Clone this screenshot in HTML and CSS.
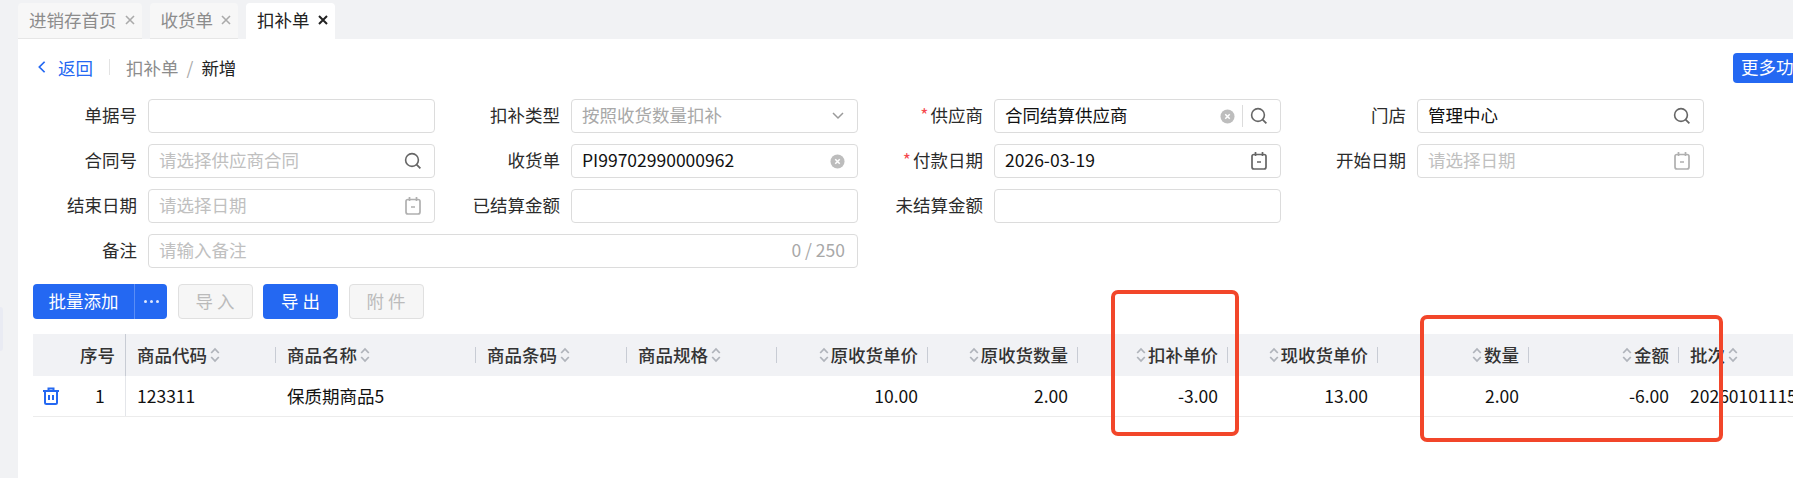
FILE: index.html
```html
<!DOCTYPE html>
<html lang="zh-CN">
<head>
    <meta charset="UTF-8">
    <meta name="viewport" content="width=device-width, initial-scale=1.0">
    <title>扣补单 新增</title>
    <link rel="stylesheet" href="styles.css">
</head>
<body>
    <svg class="defs" width="0" height="0">
        <symbol id="i-search" viewBox="0 0 18 18"><circle cx="8" cy="8" r="6.4" fill="none" stroke="currentColor" stroke-width="1.6"/><path d="M12.6 12.6L16.4 16.4" stroke="currentColor" stroke-width="1.8" fill="none"/></symbol>
        <symbol id="i-date" viewBox="0 0 18 20"><rect x="2" y="3.5" width="14" height="14.5" rx="2" fill="none" stroke="currentColor" stroke-width="1.7"/><path d="M5.5 1v4M12.5 1v4M7 11h4" stroke="currentColor" stroke-width="1.7" fill="none"/></symbol>
        <symbol id="i-clear" viewBox="0 0 16 16"><circle cx="8" cy="8" r="7.5" fill="#bdbdbd"/><path d="M5.6 5.6l4.8 4.8M10.4 5.6l-4.8 4.8" stroke="#fff" stroke-width="1.6"/></symbol>
        <symbol id="i-sort" viewBox="0 0 10 16"><path d="M1.2 6L5 2l3.8 4M1.2 10L5 14l3.8-4" fill="none" stroke="#b0b4bb" stroke-width="1.8"/></symbol>
    </svg>

    <div class="tabs">
        <div class="tab">进销存首页<svg class="tab-x" viewBox="0 0 10 10"><path d="M1 1l8 8M9 1l-8 8"/></svg></div>
        <div class="tab">收货单<svg class="tab-x" viewBox="0 0 10 10"><path d="M1 1l8 8M9 1l-8 8"/></svg></div>
        <div class="tab tab-active">扣补单<svg class="tab-x" viewBox="0 0 10 10"><path d="M1 1l8 8M9 1l-8 8"/></svg></div>
    </div>

    <div class="side-mark"></div>

    <div class="card">
        <div class="nav">
            <svg class="nav-back" viewBox="0 0 10 16"><path d="M8 2L2 8l6 6"/></svg>
            <span class="nav-link">返回</span>
            <span class="nav-line"></span>
            <span class="nav-gray">扣补单</span>
            <span class="nav-slash">/</span>
            <span class="nav-now">新增</span>
            <button class="more-btn">更多功能</button>
        </div>

        <div class="form">
            <div class="item"><label>单据号</label><div class="field"></div></div>
            <div class="item"><label>扣补类型</label><div class="field"><span class="ph dim">按照收货数量扣补</span><svg class="arrow" viewBox="0 0 12 8"><path d="M1 1l5 5 5-5"/></svg></div></div>
            <div class="item"><label><em>*</em>供应商</label><div class="field"><span class="val">合同结算供应商</span><svg class="ico-clear"><use href="#i-clear"/></svg><i class="sep"></i><svg class="ico-search"><use href="#i-search"/></svg></div></div>
            <div class="item"><label>门店</label><div class="field"><span class="val">管理中心</span><svg class="ico-search"><use href="#i-search"/></svg></div></div>

            <div class="item"><label>合同号</label><div class="field"><span class="ph">请选择供应商合同</span><svg class="ico-search"><use href="#i-search"/></svg></div></div>
            <div class="item"><label>收货单</label><div class="field"><span class="val">PI99702990000962</span><svg class="ico-clear"><use href="#i-clear"/></svg></div></div>
            <div class="item"><label><em>*</em>付款日期</label><div class="field"><span class="val">2026-03-19</span><svg class="ico-date"><use href="#i-date"/></svg></div></div>
            <div class="item"><label>开始日期</label><div class="field"><span class="ph">请选择日期</span><svg class="ico-date light"><use href="#i-date"/></svg></div></div>

            <div class="item"><label>结束日期</label><div class="field"><span class="ph">请选择日期</span><svg class="ico-date light"><use href="#i-date"/></svg></div></div>
            <div class="item"><label>已结算金额</label><div class="field"></div></div>
            <div class="item"><label>未结算金额</label><div class="field"></div></div>
            <div class="item"></div>

            <div class="item item-wide"><label>备注</label><div class="field"><span class="ph">请输入备注</span><span class="count">0 / 250</span></div></div>
        </div>

        <div class="toolbar">
            <div class="btn-group">
                <button class="btn btn-main">批量添加</button>
                <button class="btn btn-dots"><i></i><i></i><i></i></button>
            </div>
            <button class="btn btn-off">导 入</button>
            <button class="btn btn-blue">导 出</button>
            <button class="btn btn-off">附 件</button>
        </div>

        <div class="grid grid-head">
            <div class="cell cell-fixed num">序号</div>
            <div class="cell line">商品代码<svg class="sort"><use href="#i-sort"/></svg></div>
            <div class="cell line">商品名称<svg class="sort"><use href="#i-sort"/></svg></div>
            <div class="cell line">商品条码<svg class="sort"><use href="#i-sort"/></svg></div>
            <div class="cell line">商品规格<svg class="sort"><use href="#i-sort"/></svg></div>
            <div class="cell line right"><svg class="sort"><use href="#i-sort"/></svg>原收货单价</div>
            <div class="cell line right"><svg class="sort"><use href="#i-sort"/></svg>原收货数量</div>
            <div class="cell line right"><svg class="sort"><use href="#i-sort"/></svg>扣补单价</div>
            <div class="cell line right"><svg class="sort"><use href="#i-sort"/></svg>现收货单价</div>
            <div class="cell line right"><svg class="sort"><use href="#i-sort"/></svg>数量</div>
            <div class="cell line right"><svg class="sort"><use href="#i-sort"/></svg>金额</div>
            <div class="cell">批次<svg class="sort"><use href="#i-sort"/></svg></div>
        </div>
        <div class="grid grid-row">
            <div class="cell cell-fixed">
                <svg class="trash" viewBox="0 0 18 18"><path d="M1 4h16M6.5 4V1.5h5V4M3 4v11.5a1.5 1.5 0 0 0 1.5 1.5h9a1.5 1.5 0 0 0 1.5-1.5V4M7 8v5M11 8v5"/></svg>
                <span class="row-no">1</span>
            </div>
            <div class="cell">123311</div>
            <div class="cell">保质期商品5</div>
            <div class="cell"></div>
            <div class="cell"></div>
            <div class="cell right">10.00</div>
            <div class="cell right">2.00</div>
            <div class="cell right">-3.00</div>
            <div class="cell right">13.00</div>
            <div class="cell right">2.00</div>
            <div class="cell right">-6.00</div>
            <div class="cell cell-clip">2026010111501</div>
        </div>
    </div>

    <!-- red marks drawn over the screenshot -->
    <div class="mark mark-a"></div>
    <div class="mark mark-b"></div>
</body>
</html>
```

FILE: styles.css
```css
* {
    box-sizing: border-box;
}
html, body {
    height: 100%;
}
body {
    font-family: "Noto Sans CJK SC", "Noto Sans", sans-serif;
    font-size: 17.5px;
    color: #333;
    background: #f1f2f4;
    margin: 0;
    overflow: hidden;
    position: relative;
}
.defs {
    position: absolute;
}

/* tabs */
.tabs {
    display: flex;
    gap: 8px;
    height: 39px;
    padding: 3px 0 0 18px;
}
.tab {
    display: flex;
    align-items: center;
    gap: 8px;
    padding: 0 7px 2px 11px;
    background: #f7f7f7;
    border-bottom: 1px solid #e6e6e6;
    border-radius: 4px 4px 0 0;
    color: #8c8c8c;
    line-height: 1;
}
.tab-active {
    background: #fff;
    border-bottom: none;
    color: #222;
}
.tab-x {
    width: 10px;
    height: 10px;
    fill: none;
    stroke: #aaa;
    stroke-width: 1.6;
}
.tab-active .tab-x {
    stroke: #222;
    stroke-width: 2;
}
.side-mark {
    position: absolute;
    left: 0;
    top: 307px;
    width: 3px;
    height: 44px;
    background: #e9ebf3;
    border-radius: 0 3px 3px 0;
}

.card {
    margin-left: 18px;
    height: 439px;
    background: #fff;
    padding-top: 14px;
}

/* breadcrumb row */
.nav {
    display: flex;
    align-items: center;
    height: 30px;
    padding: 0 0 2px 19px;
}
.nav-back {
    width: 10px;
    height: 14px;
    fill: none;
    stroke: #2468f2;
    stroke-width: 2;
}
.nav-link {
    color: #2468f2;
    margin-left: 11px;
}
.nav-line {
    width: 1px;
    height: 16px;
    background: #e3e3e3;
    margin: 0 16px;
}
.nav-gray {
    color: #8c8c8c;
}
.nav-slash {
    color: #aaa;
    margin: 0 8px;
}
.nav-now {
    color: #222;
}
.more-btn {
    margin-left: auto;
    margin-right: -32px;
    margin-bottom: -2px;
    height: 30px;
    width: 92px;
    flex-shrink: 0;
    padding: 0 8px 3px;
    background: #2468f2;
    color: #fff;
    border: none;
    border-radius: 4px;
    font: inherit;
    text-align: left;
    white-space: nowrap;
}

/* form */
.form {
    display: grid;
    grid-template-columns: 417px 423px 423px 423px;
    grid-auto-rows: 34px;
    row-gap: 11px;
    margin-top: 16px;
}
.item {
    display: flex;
    align-items: center;
    gap: 11px;
    min-width: 0;
}
.item label {
    flex: 1;
    padding-bottom: 3px;
    text-align: right;
    color: #2b2b2b;
    white-space: nowrap;
}
.item label em {
    color: #f5484d;
    font-style: normal;
    margin-right: 2px;
}
.item-wide {
    grid-column: span 2;
}
.field {
    display: flex;
    align-items: center;
    width: 287px;
    height: 34px;
    padding: 0 12px 0 10px;
    border: 1px solid #dcdcdc;
    border-radius: 4px;
    background: #fff;
    color: #111;
}
.item-wide .field {
    width: 710px;
}
.ph, .val {
    flex: 1;
    padding-bottom: 3px;
    white-space: nowrap;
}
.ph {
    color: #c0c0c0;
}
.ph.dim {
    color: #a8a8a8;
}
.count {
    padding-bottom: 3px;
    color: #a8a8a8;
}
.arrow {
    width: 12px;
    height: 8px;
    fill: none;
    stroke: #9a9a9a;
    stroke-width: 1.5;
    margin-right: 1px;
}
.ico-search {
    width: 18px;
    height: 18px;
    color: #666;
}
.ico-date {
    width: 18px;
    height: 20px;
    color: #666;
}
.ico-date.light {
    color: #b0b0b0;
}
.ico-clear {
    width: 15px;
    height: 15px;
}
.sep {
    width: 1px;
    height: 22px;
    background: #dcdcdc;
    margin: 0 7px;
}

/* buttons above the table */
.toolbar {
    display: flex;
    gap: 10.5px;
    height: 35px;
    margin: 16px 0 15px 15px;
}
.btn {
    height: 35px;
    width: 75px;
    padding: 0 0 3px;
    border-radius: 4px;
    font: inherit;
}
.btn-group {
    display: flex;
}
.btn-main {
    width: 101px;
    background: #2468f2;
    color: #fff;
    border: none;
    border-radius: 4px 0 0 4px;
}
.btn-dots {
    display: flex;
    align-items: center;
    justify-content: center;
    gap: 3px;
    width: 33px;
    padding: 0;
    background: #2468f2;
    border: none;
    border-left: 1px solid #5a8df5;
    border-radius: 0 4px 4px 0;
}
.btn-dots i {
    width: 3px;
    height: 3px;
    border-radius: 50%;
    background: #dfe8fd;
}
.btn-blue {
    background: #2468f2;
    color: #fff;
    border: none;
}
.btn-off {
    background: #f6f6f6;
    color: #bbb;
    border: 1px solid #e0e0e0;
}

/* table */
.grid {
    display: grid;
    grid-template-columns: 93px 150px 200px 151px 150px 151px 150px 150px 150px 151px 150px 114px;
    margin-left: 15px;
}
.grid-head {
    height: 42px;
    background: #f1f2f5;
    font-weight: 500;
    color: #333;
}
.grid-row {
    height: 41px;
    border-bottom: 1px solid #ececec;
    color: #111;
}
.cell {
    position: relative;
    display: flex;
    align-items: center;
    padding: 0 10px 2px 11px;
    white-space: nowrap;
}
.cell.right {
    justify-content: flex-end;
}
.cell-fixed {
    padding: 0 10px 2px 0;
    border-right: 1px solid #e4e6ea;
}
.grid-head .cell-fixed {
    border-right-color: #c8ccd4;
}
.cell-fixed.num {
    justify-content: flex-end;
}
.line::after {
    content: "";
    position: absolute;
    right: 0;
    top: 13px;
    width: 1px;
    height: 16px;
    background: #c8ccd4;
}
.sort {
    width: 10px;
    height: 16px;
    margin: 2px 2px 0 3px;
    flex-shrink: 0;
}
.trash {
    width: 18px;
    height: 18px;
    margin: 2px 0 0 9px;
    fill: none;
    stroke: #2468f2;
    stroke-width: 2;
}
.row-no {
    margin-left: 35px;
}

/* annotation boxes */
.mark {
    position: absolute;
    border: 4px solid #f2462a;
    border-radius: 7px;
}
.mark-a {
    left: 1111px;
    top: 290px;
    width: 128px;
    height: 146px;
}
.mark-b {
    left: 1420px;
    top: 315px;
    width: 303px;
    height: 127px;
}
```
